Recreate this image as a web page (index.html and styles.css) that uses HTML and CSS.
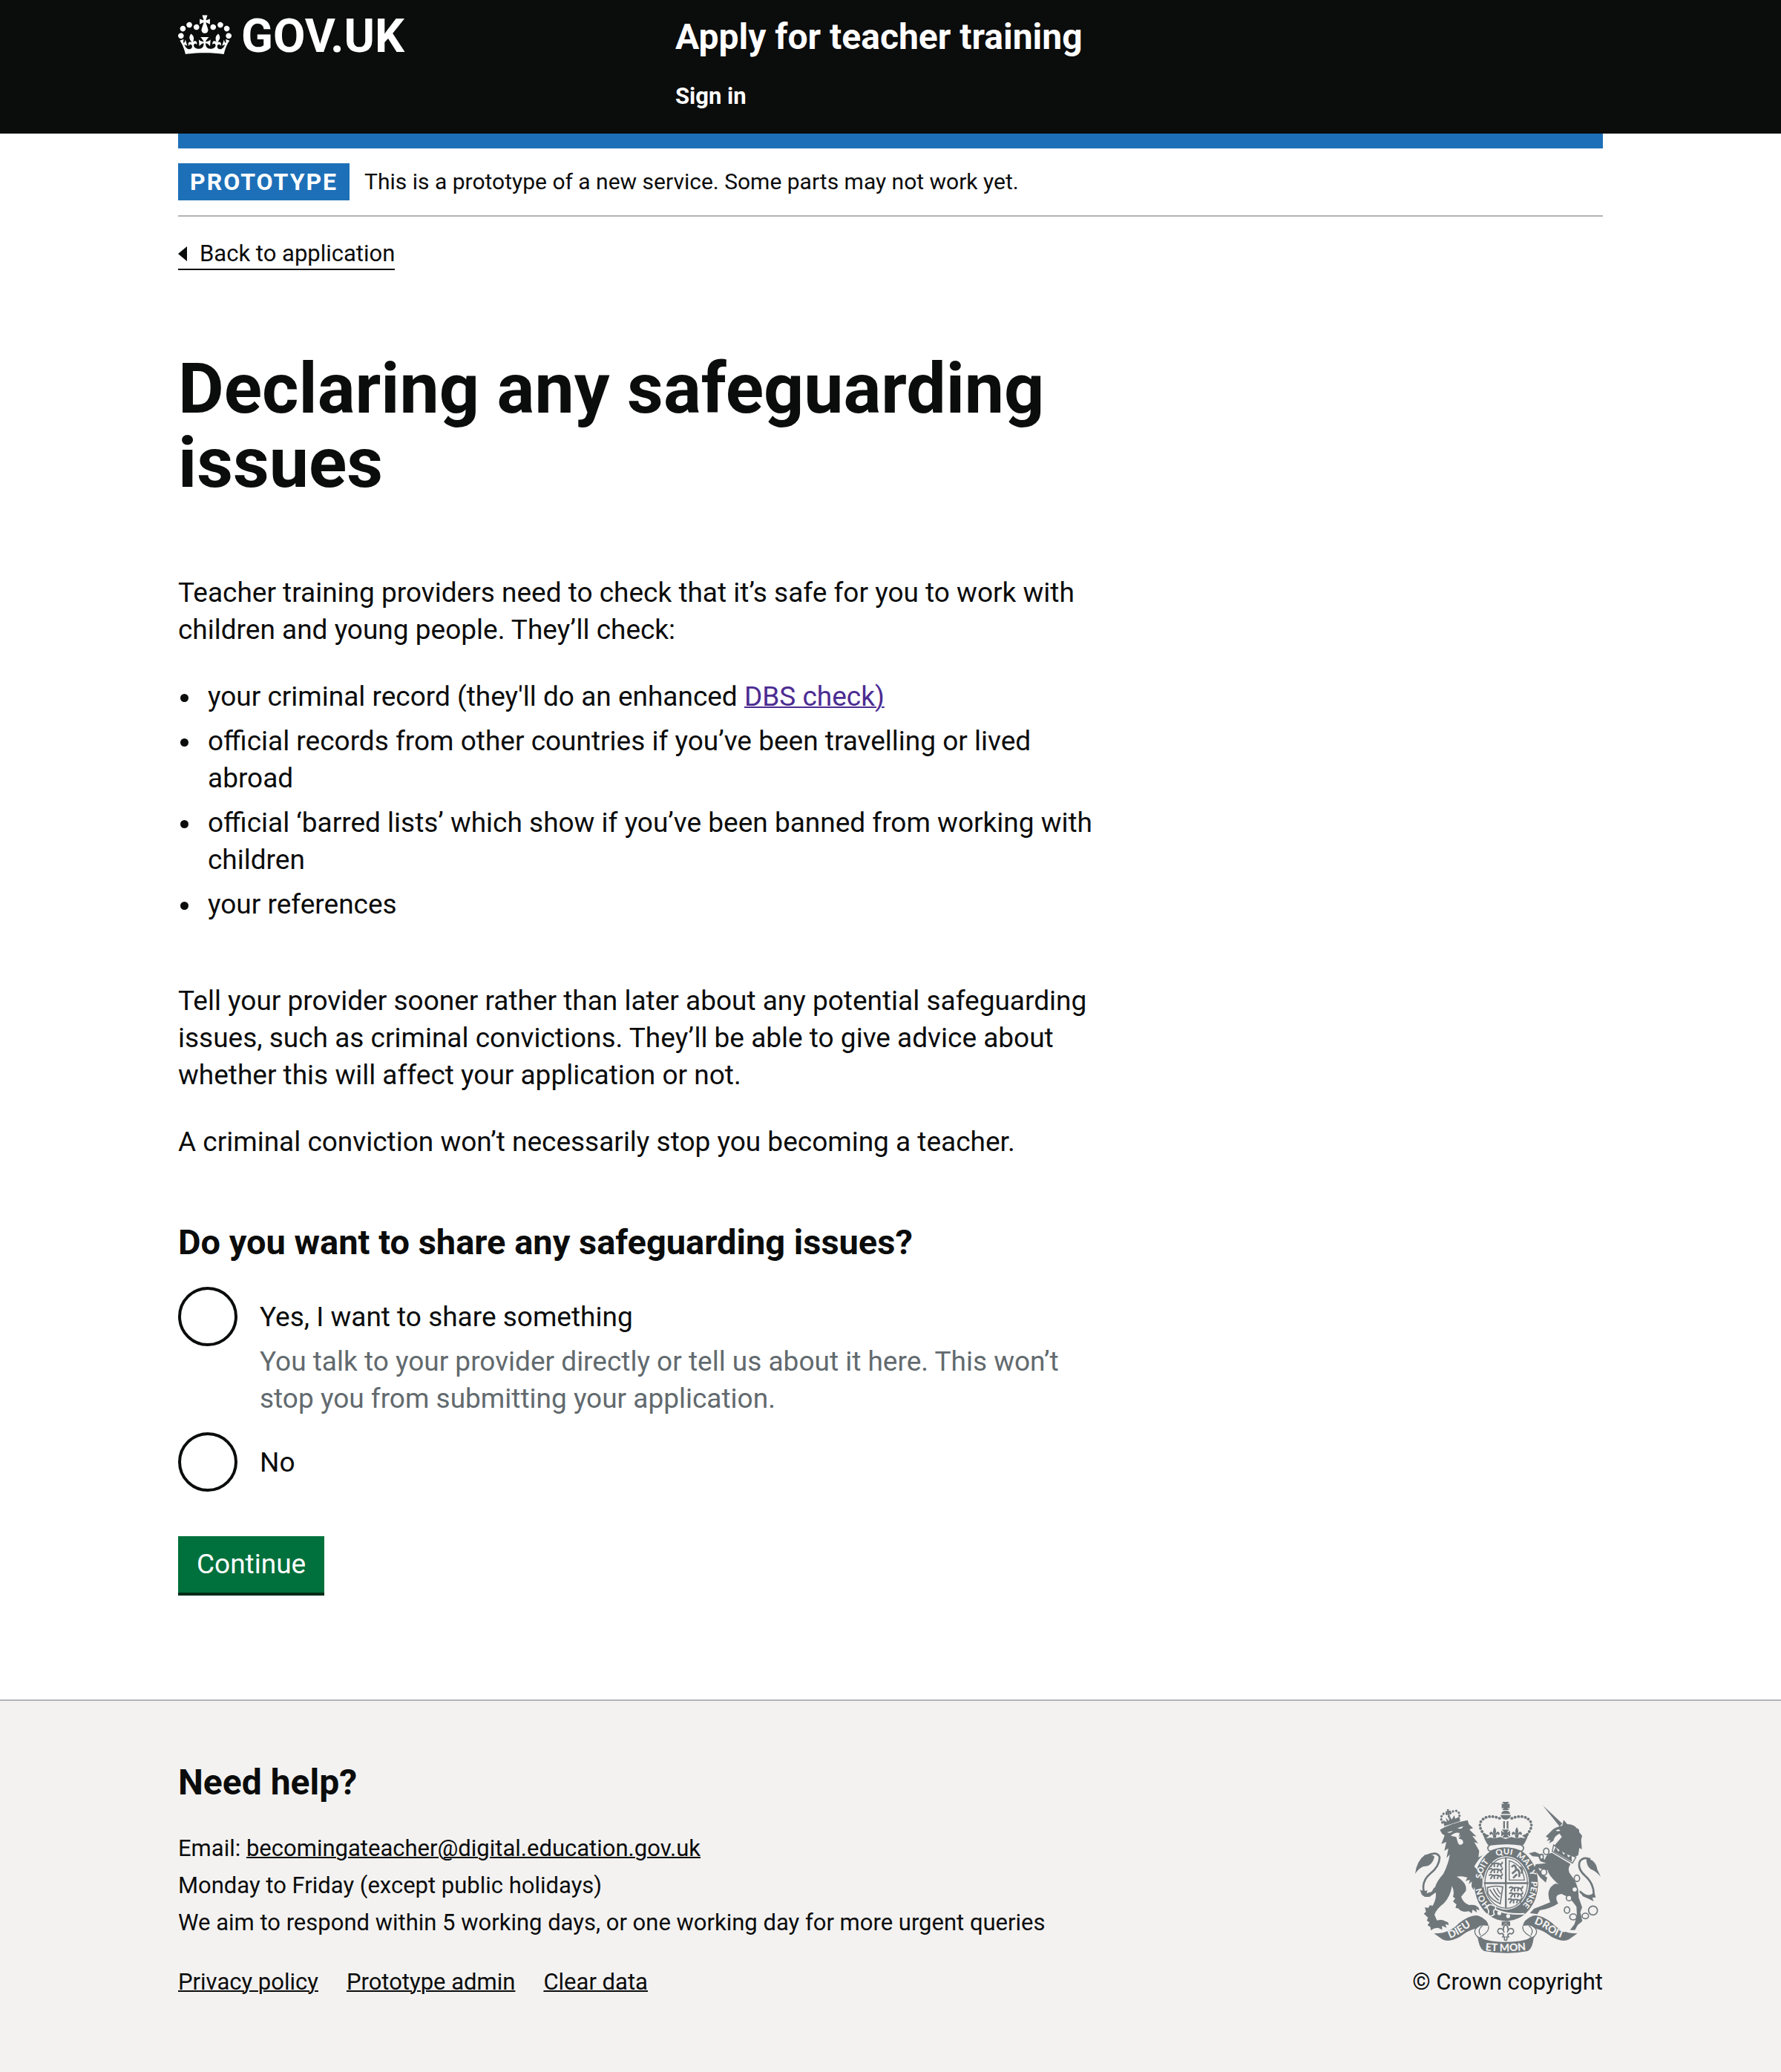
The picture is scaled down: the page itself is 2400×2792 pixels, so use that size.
FILE: index.html
```html
<!DOCTYPE html>
<html lang="en">
<head>
<meta charset="utf-8">
<meta name="viewport" content="width=device-width, initial-scale=1">
<title>Declaring any safeguarding issues</title>
<link rel="stylesheet" href="styles.css">
</head>
<body>
<header class="header">
  <div class="container header-grid">
    <a class="logo" href="#">
      <svg class="logo-crown" viewBox="0 0 132 97" aria-hidden="true"><path fill="currentColor" fill-rule="evenodd" d="M25 30.2c3.5 1.5 7.7-.2 9.1-3.7 1.5-3.6-.2-7.8-3.9-9.2-3.6-1.4-7.6.3-9.1 3.9-1.4 3.5.3 7.5 3.9 9zM9 39.5c3.6 1.5 7.8-.2 9.2-3.7 1.5-3.6-.2-7.8-3.9-9.1-3.6-1.5-7.6.2-9.1 3.8-1.4 3.5.3 7.5 3.8 9zM4.4 57.2c3.5 1.5 7.7-.2 9.1-3.8 1.5-3.6-.2-7.7-3.9-9.1-3.5-1.5-7.6.3-9.1 3.8-1.4 3.5.3 7.6 3.9 9.1zm38.3-21.4c3.5 1.5 7.7-.2 9.1-3.8 1.5-3.6-.2-7.7-3.9-9.1-3.6-1.5-7.6.3-9.1 3.8-1.3 3.6.4 7.7 3.9 9.1zm64.4-5.6c-3.6 1.5-7.8-.2-9.1-3.7-1.5-3.6.2-7.8 3.8-9.2 3.6-1.4 7.7.3 9.2 3.9 1.3 3.5-.4 7.5-3.9 9zm15.9 9.3c-3.6 1.5-7.7-.2-9.1-3.7-1.5-3.6.2-7.8 3.7-9.1 3.6-1.5 7.7.2 9.2 3.8 1.5 3.5-.3 7.5-3.8 9zm4.7 17.7c-3.6 1.5-7.8-.2-9.2-3.8-1.5-3.6.2-7.7 3.9-9.1 3.6-1.5 7.7.3 9.2 3.8 1.3 3.5-.4 7.6-3.9 9.1zM89.3 35.8c-3.6 1.5-7.8-.2-9.2-3.8-1.4-3.6.2-7.7 3.9-9.1 3.6-1.5 7.7.3 9.2 3.8 1.4 3.6-.3 7.7-3.9 9.1zM69.7 17.7l8.9 4.7V9.3l-8.9 2.8c-.2-.3-.5-.6-.9-.9L72.4 0H59.6l3.5 11.2c-.3.3-.6.5-.9.9l-8.8-2.8v13.1l8.8-4.7c.3.3.6.7.9.9l-5 15.4v.1c-.2.8-.4 1.6-.4 2.4 0 4.1 3.1 7.5 7 8.1h.2c.3 0 .7.1 1 .1.4 0 .7 0 1-.1h.2c4-.6 7.1-4.1 7.1-8.1 0-.8-.1-1.7-.4-2.4V34l-5.1-15.4c.4-.2.7-.6 1-.9zM66 92.8c16.9 0 32.8 1.1 47.1 3.2 4-16.9 8.9-26.7 14-33.5l-9.6-3.4c1 4.9 1.1 7.2 0 10.2-1.5-1.4-3-4.3-4.2-8.7L108.6 76c2.8-2 5-3.2 7.5-3.3-4.4 9.4-10 11.9-13.6 11.2-4.3-.8-6.3-4.6-5.6-7.9 1-4.7 5.7-5.9 8-.5 4.3-8.7-3-11.4-7.6-8.8 7.1-7.2 7.9-13.5 2.1-21.1-8 6.1-8.1 12.3-4.5 20.8-4.7-5.4-12.1-2.5-9.5 6.2 3.4-5.2 7.9-2 7.2 3.1-.6 4.3-6.4 7.8-13.5 7.2-10.3-.9-10.9-8-11.2-13.8 2.5-.5 7.1 1.8 11 7.3L80.2 60c-4.1 4.4-8 5.3-12.3 5.4 1.4-4.4 8-11.6 8-11.6H55.5s6.4 7.2 7.9 11.6c-4.2-.1-8-1-12.3-5.4l1.4 16.4c3.9-5.5 8.5-7.7 10.9-7.3-.3 5.8-.9 12.8-11.1 13.8-7.2.6-12.9-2.9-13.5-7.2-.7-5 3.8-8.3 7.1-3.1 2.7-8.7-4.6-11.6-9.4-6.2 3.7-8.5 3.6-14.7-4.6-20.8-5.8 7.6-5 13.9 2.2 21.1-4.7-2.6-11.9.1-7.7 8.8 2.3-5.5 7.1-4.2 8.1.5.7 3.3-1.3 7.1-5.7 7.9-3.5.7-9-1.8-13.5-11.2 2.5.1 4.7 1.3 7.5 3.3l-4.7-15.4c-1.2 4.4-2.7 7.2-4.3 8.7-1.1-3-.9-5.3 0-10.2l-9.5 3.4c5 6.9 9.9 16.7 14 33.5 14.8-2.1 30.8-3.2 47.7-3.2z"/></svg>
      <span>GOV.UK</span>
    </a>
    <div class="header-content">
      <a class="service-name" href="#">Apply for teacher training</a>
      <nav aria-label="Account"><a class="header-link" href="#">Sign in</a></nav>
    </div>
  </div>
</header>

<div class="page">
  <div class="container">
    <div class="phase-banner">
      <strong class="tag">PROTOTYPE</strong>
      <span>This is a prototype of a new service. Some parts may not work yet.</span>
    </div>
    <a class="back-link" href="#"><span class="back-arrow"></span>Back to application</a>

    <main class="main">
      <h1 class="title">Declaring any safeguarding issues</h1>
      <p class="body">Teacher training providers need to check that it’s safe for you to work with children and young people. They’ll check:</p>
      <ul class="list">
        <li>your criminal record (they'll do an enhanced <a class="visited" href="#">DBS check)</a></li>
        <li>official records from other countries if you’ve been travelling or lived abroad</li>
        <li>official ‘barred lists’ which show if you’ve been banned from working with children</li>
        <li>your references</li>
      </ul>
      <p class="body">Tell your provider sooner rather than later about any potential safeguarding issues, such as criminal convictions. They’ll be able to give advice about whether this will affect your application or not.</p>
      <p class="body">A criminal conviction won’t necessarily stop you becoming a teacher.</p>

      <form class="form">
        <fieldset class="fieldset">
          <legend class="legend">Do you want to share any safeguarding issues?</legend>
          <div class="radios">
            <div class="radio">
              <input class="radio-input" type="radio" name="share" id="share-yes" value="yes" aria-describedby="share-yes-hint">
              <div class="radio-text">
                <label for="share-yes">Yes, I want to share something</label>
                <div class="hint" id="share-yes-hint">You talk to your provider directly or tell us about it here. This won’t stop you from submitting your application.</div>
              </div>
            </div>
            <div class="radio">
              <input class="radio-input" type="radio" name="share" id="share-no" value="no">
              <div class="radio-text"><label for="share-no">No</label></div>
            </div>
          </div>
        </fieldset>
        <button class="button" type="submit">Continue</button>
      </form>
    </main>
  </div>
</div>

<footer class="footer">
  <div class="container footer-row">
    <div class="footer-main">
      <h2 class="footer-heading">Need help?</h2>
      <address class="contact">
        Email: <a href="#">becomingateacher@digital.education.gov.uk</a><br>
        Monday to Friday (except public holidays)<br>
        We aim to respond within 5 working days, or one working day for more urgent queries
      </address>
      <ul class="footer-links">
        <li><a href="#">Privacy policy</a></li>
        <li><a href="#">Prototype admin</a></li>
        <li><a href="#">Clear data</a></li>
      </ul>
    </div>
    <a class="copyright" href="#">
      <svg class="crest" viewBox="72 54 750 612" aria-hidden="true">
        <defs>
          <path id="garter" d="M440 499A101 116 0 0 1 339 382A101 116 0 0 1 440 266A101 116 0 0 1 541 382A101 116 0 0 1 440 499"/>
          <path id="dieu" d="M212 606Q250 592 280 568Q300 553 330 546"/>
          <path id="droit" d="M552 546Q590 560 612 578Q640 598 690 612"/>
          <path id="etmon" d="M340 653Q438 664 536 651"/>
          <g id="fleur"><path d="M0-28Q-12-12 0 8Q12-12 0-28M-3 4Q-8-14-18-8Q-24 0-16 5Q-16-2-8 2L-5 16H5L8 2Q16-2 16 5Q24 0 18-8Q8-14 3 4Z"/></g>
          <g id="cross"><path d="M-16-16Q-6-6-6-4Q-10-6-18-12V12Q-10 6-6 4Q-6 6-14 16H14Q6 6 6 4Q10 6 18 12V-12Q10-6 6-4Q6-6 14-16Z"/></g>
          <g id="beast" fill="none" stroke="#6f777b" stroke-width="6"><path d="M-28-4Q-20-12-12-4Q4-8 18-2Q28-2 26-12M-14-2L-22 10M-6-2V10M10-2L6 10M18-2L24 10"/></g>
        </defs>
        <g fill="#6f777b">
          <!-- lion and its crown -->
          <path fill="none" stroke="#6f777b" stroke-width="9" stroke-linecap="round" stroke-dasharray="1 12" d="M182 138Q170 115 187 102Q200 98 208 112Q216 90 238 90Q258 98 248 124"/>
          <path d="M184 128L200 136L196 118L208 132L212 112L220 126L230 108L234 122L250 114L254 132L190 152ZM200 84L209 83L207 90L216 89L216 97L209 96L212 106L203 107L204 98L195 100L195 92L202 92Z"/>
          <path d="M172 167Q215 140 284 128L289 144L306 160L291 166L320 194L303 191L327 222L311 217L331 252L328 278L352 268Q330 285 314 315Q338 338 347 366L345 398L352 408L334 402L337 416L320 407L313 394L308 410L300 396L301 376L289 386L293 369L276 374L283 360Q262 352 240 356Q284 382 277 414L258 437Q266 462 290 471Q314 468 322 477Q332 482 331 493L319 487L322 501L304 490L301 505L288 496Q262 503 247 485L235 482L239 469L225 457L234 444L225 438Q232 418 221 394Q214 438 188 464Q158 486 150 510L160 533Q184 528 194 537Q209 539 207 552L194 548L199 563L181 555L181 571L165 563Q145 564 135 574L134 560L122 553L130 541L119 534L124 522L107 506L116 498L111 481L126 482L131 472L143 474Q164 436 151 408Q153 382 186 345Q208 301 212 266L199 281L206 242L190 252L198 216L178 224L191 190L181 183Z"/>
          <path d="M118 424L139 417L150 398L160 416L147 426L130 438L111 438L99 430L91 409Q104 418 122 412Z"/>
          <path d="M72 345Q78 293 112 268Q140 262 150 276Q140 316 106 315Q86 323 72 345Z"/>
          <path fill="none" stroke="#6f777b" stroke-width="8" d="M122 270Q160 252 171 278Q170 315 132 345Q96 376 108 420"/>
          <path fill="#f3f2f1" d="M201 177L224 171Q215 184 201 177ZM243 160L266 152Q261 168 243 160ZM216 191Q234 175 252 180L247 198L256 187Q254 196 248 203Q270 204 265 223Q251 234 245 220L238 196Z"/>

          <!-- garter and shield -->
          <ellipse cx="440" cy="385" rx="129" ry="151"/>
          <path fill="none" stroke="#f3f2f1" stroke-width="5" d="M352 268Q330 285 314 315Q338 338 347 366L346 400"/>
          <ellipse cx="440" cy="382" rx="92" ry="108" fill="#f3f2f1"/>
          <ellipse cx="440" cy="382" rx="86" ry="102" fill="none" stroke="#6f777b" stroke-width="4"/>
          <path d="M435 278h7v204h-7zM350 379h180v7H350z"/>
          <use href="#beast" x="398" y="308"/><use href="#beast" x="398" y="332"/><use href="#beast" x="398" y="356"/>
          <use href="#beast" x="480" y="406"/><use href="#beast" x="480" y="430"/><use href="#beast" x="476" y="454"/>
          <path fill="none" stroke="#6f777b" stroke-width="4" d="M452 292Q506 306 514 370H452Z"/>
          <path fill="none" stroke="#6f777b" stroke-width="8" d="M462 318Q476 300 480 326Q498 330 492 358M480 330L464 344M484 346L468 362M494 318Q510 322 502 344"/>
          <path fill="none" stroke="#6f777b" stroke-width="5" d="M364 400Q398 390 426 398L416 466Q380 450 366 424ZM374 408Q392 438 410 452M388 404Q400 430 414 440M402 402Q410 420 418 426"/>
          <path fill="none" stroke="#f3f2f1" stroke-width="6" d="M388 484Q438 512 514 506"/>
          <path d="M362 482Q370 464 386 472Q402 474 396 488Q384 492 392 508Q376 524 366 508Q374 494 362 482Z" stroke="#f3f2f1" stroke-width="5"/>
          <circle cx="412" cy="504" r="8" fill="#f3f2f1"/><circle cx="448" cy="516" r="8" fill="#f3f2f1"/>
          <g class="crest-motto" fill="#f3f2f1" text-anchor="middle">
            <text><textPath href="#garter" startOffset="112">HON</textPath></text>
            <text><textPath href="#garter" startOffset="226">SOIT</textPath></text>
            <text><textPath href="#garter" startOffset="334">QUI</textPath></text>
            <text><textPath href="#garter" startOffset="434">MAL Y</textPath></text>
            <text><textPath href="#garter" startOffset="558">PENSE</textPath></text>
          </g>

          <!-- royal crown -->
          <path d="M424 54h28l-7 10l9-3v20l-9-4l7 10h-28l7-10l-9 4V61l9 3ZM420 103a18 14 0 0 1 36 0ZM417 107h42q-4 18-21 19q-18-1-21-19zM428 132h7v30h-7zM442 132h7v30h-7z"/>
          <path fill="none" stroke="#6f777b" stroke-width="11" stroke-linecap="round" stroke-dasharray="1 13" d="M351 186Q324 152 340 130Q366 100 422 124M525 186Q552 152 536 130Q510 100 454 124"/>
          <use href="#cross" x="438" y="182"/><use href="#fleur" x="393" y="184"/><use href="#fleur" x="483" y="184"/>
          <path d="M346 180L372 190L358 202L378 198L392 202L416 196L438 204L460 196L484 202L498 198L518 202L504 190L530 180Q526 206 508 230Q438 216 368 230Q350 206 346 180Z"/>
          <path fill="#f3f2f1" stroke="#6f777b" stroke-width="5" d="M376 228Q438 218 500 228Q520 240 502 254Q438 226 374 254Q356 240 376 228Z"/>

          <!-- unicorn -->
          <path d="M588 68L667 142L656 154Z"/>
          <path d="M600 194L624 170Q636 156 667 150L672 127L687 144Q718 146 724 160Q737 163 735 176L747 191L743 208L746 246L736 240L731 270L718 276Q670 262 634 232L665 196L656 182Q636 190 630 212L613 222L619 208L604 212L612 200Z"/>
          <path fill="#f3f2f1" d="M641 170Q650 162 659 169Q652 176 641 170Z"/>
          <path fill="#f3f2f1" stroke="#6f777b" stroke-width="4" d="M632 228L626 254L708 302L722 278Q670 262 632 228Z"/>
          <path d="M632 254L640 236L651 256L660 244L672 268L684 256L690 278L704 270L706 296Z"/>
          <path d="M625 260L700 305Q684 330 702 350Q734 388 733 440L747 480L740 500L748 536L729 552L718 572L698 572L716 548L726 514L724 478Q700 440 664 426Q630 430 650 465Q618 486 576 492L566 508L536 504L552 486L574 478L618 460Q596 406 640 384L652 388Q610 350 608 330L570 322L585 346L606 360L600 380L578 360L552 324L560 306L602 302L578 294L570 276L546 274L532 262L556 256L578 266L596 288Q602 262 625 260Z"/>
          <path fill="none" stroke="#6f777b" stroke-width="8" d="M738 416Q772 448 794 426Q794 384 758 352Q726 322 738 294Q752 274 780 286"/>
          <path d="M764 282Q802 288 808 326L822 356Q798 330 782 326Q764 314 764 282ZM734 410L750 436L774 446L794 456L788 442L802 440L798 426L768 436Z"/>
          <g fill="#f3f2f1" stroke="#6f777b" stroke-width="5"><ellipse cx="602" cy="254" rx="11" ry="13"/><ellipse cx="583" cy="276" rx="7" ry="10"/><ellipse cx="592" cy="338" rx="12" ry="13"/><ellipse cx="726" cy="363" rx="11" ry="13"/><ellipse cx="717" cy="408" rx="11" ry="11"/><ellipse cx="694" cy="443" rx="11" ry="11"/><ellipse cx="686" cy="491" rx="11" ry="13"/><ellipse cx="711" cy="519" rx="14" ry="12"/><ellipse cx="760" cy="515" rx="13" ry="11"/><circle cx="791" cy="493" r="18"/></g>

          <!-- motto ribbon -->
          <g id="ribbon-side">
            <path d="M148 586Q210 588 250 544Q300 506 330 515Q366 530 369 556Q338 548 316 566Q284 574 252 600Q206 624 182 610Z"/>
            <path fill="none" stroke="#6f777b" stroke-width="4" d="M369 556Q372 578 344 594Q326 604 344 606M330 556Q296 576 330 606M344 555Q322 570 336 594"/>
          </g>
          <use href="#ribbon-side" transform="matrix(-1 0 0 1 876 0)"/>
          <path d="M324 596Q360 620 438 620Q516 620 552 596Q548 646 528 657Q438 674 350 657Q330 646 324 596Z"/>
          <g class="crest-ribbon" fill="#f3f2f1">
            <text><textPath href="#dieu">DIEU</textPath></text>
            <text><textPath href="#droit">DROIT</textPath></text>
            <text text-anchor="middle"><textPath href="#etmon" startOffset="98">ET MON</textPath></text>
          </g>
          <path d="M422 538h34v18l-8-2l-10-12l-10 12l-6 2z"/>
          <path fill="#f3f2f1" stroke="#6f777b" stroke-width="5" d="M438 548Q422 564 432 582Q424 560 410 568Q400 580 414 588Q424 582 430 592L426 600H434Q430 614 438 614Q446 614 442 600H450L446 592Q452 582 462 588Q476 580 466 568Q452 560 444 582Q454 564 438 548Z"/>
        </g>
      </svg>
      <span>© Crown copyright</span>
    </a>
  </div>
</footer>
</body>
</html>
```
FILE: styles.css
```css
*,
*::before,
*::after {
  box-sizing: border-box;
}

body {
  margin: 0;
  background: #f3f2f1;
  color: #0b0c0c;
  font-family: Roboto, "Liberation Sans", Arial, sans-serif;
  font-size: 37px;
  line-height: 50px;
}

h1,
h2,
p,
ul {
  margin: 0;
  padding: 0;
}

a {
  color: inherit;
}

.container {
  max-width: 2040px;
  margin: 0 auto;
  padding: 0 60px;
}

/* Header */
.header {
  background: #0b0c0c;
  color: #ffffff;
}

.header-grid {
  display: grid;
  grid-template-columns: 1fr 2fr;
  column-gap: 45px;
  padding-top: 20px;
  padding-bottom: 30px;
}

.header a {
  text-decoration: none;
}

.logo {
  display: flex;
  align-items: flex-start;
  gap: 13px;
  font-size: 63px;
  font-weight: 700;
  line-height: 58px;
}

.logo-crown {
  width: 72px;
  height: 54px;
}

.service-name {
  display: block;
  margin-bottom: 30px;
  font-size: 48px;
  font-weight: 700;
  line-height: 60px;
}

.header-link {
  display: block;
  font-size: 31px;
  font-weight: 700;
  line-height: 40px;
}

/* Page */
.page {
  padding-bottom: 144px;
  background: #ffffff;
}

.phase-banner {
  display: flex;
  align-items: center;
  gap: 20px;
  padding: 20px 0;
  border-top: 20px solid #1d70b8;
  border-bottom: 2px solid #b1b4b6;
  font-size: 30px;
}

.tag {
  padding: 0 16px;
  background: #1d70b8;
  color: #ffffff;
  font-size: 32px;
  font-weight: 700;
  letter-spacing: 2px;
}

.back-link {
  display: inline-flex;
  align-items: center;
  gap: 17px;
  margin: 30px 0 110px;
  border-bottom: 2px solid #0b0c0c;
  font-size: 31px;
  line-height: 40px;
  text-decoration: none;
}

.back-arrow {
  border: 10px solid transparent;
  border-right: 12px solid #0b0c0c;
  border-left: 0;
}

.main {
  width: 66.66%;
  padding-right: 30px;
}

.title {
  margin-bottom: 100px;
  font-size: 95px;
  font-weight: 700;
  line-height: 100px;
}

.body {
  margin-bottom: 40px;
}

.list {
  margin-bottom: 80px;
  padding-left: 32px;
}

.list li {
  margin-bottom: 10px;
  padding-left: 8px;
}

.visited {
  color: #4c2c92;
}

.visited,
.footer a {
  text-decoration-thickness: 2px;
}

.form {
  margin-top: 80px;
}

.fieldset {
  min-width: 0;
  margin: 0 0 60px;
  padding: 0;
  border: 0;
}

.legend {
  margin-bottom: 30px;
  padding: 0;
  font-size: 47px;
  font-weight: 700;
  line-height: 60px;
}

.radios {
  display: grid;
  gap: 20px;
}

.radio {
  display: flex;
  align-items: flex-start;
  gap: 30px;
}

.radio-input {
  flex: none;
  width: 80px;
  height: 80px;
  margin: 0;
  border: 4px solid #0b0c0c;
  border-radius: 50%;
  background: #ffffff;
  appearance: none;
}

.radio-input:checked {
  background: radial-gradient(#0b0c0c 50%, #ffffff 52%);
}

.radio-text {
  padding-top: 16px;
}

.radio-text label {
  display: block;
}

.hint {
  margin-top: 10px;
  color: #626a6e;
}

.button {
  display: block;
  padding: 13px 25px;
  border: 0;
  background: #00703c;
  box-shadow: 0 4px 0 #002d18;
  color: #ffffff;
  font: inherit;
}

/* Footer */
.footer {
  padding: 80px 0 96px;
  border-top: 2px solid #b1b4b6;
  font-size: 31px;
}

.footer-row {
  display: flex;
  align-items: flex-end;
  justify-content: space-between;
}

.footer-heading {
  margin-bottom: 34px;
  font-size: 48px;
  font-weight: 700;
  line-height: 60px;
}

.contact {
  margin-bottom: 30px;
  font-style: normal;
}

.footer-links {
  display: flex;
  gap: 38px;
  list-style: none;
}

.footer .copyright {
  display: flex;
  flex-direction: column;
  align-items: center;
  gap: 14px;
  text-decoration: none;
}

.crest {
  width: 250px;
  height: 204px;
}

.crest-motto,
.crest-ribbon {
  font-family: Lato, "Liberation Sans", sans-serif;
  font-weight: 900;
}

.crest-motto {
  font-size: 34px;
}

.crest-ribbon {
  font-size: 42px;
}
```
